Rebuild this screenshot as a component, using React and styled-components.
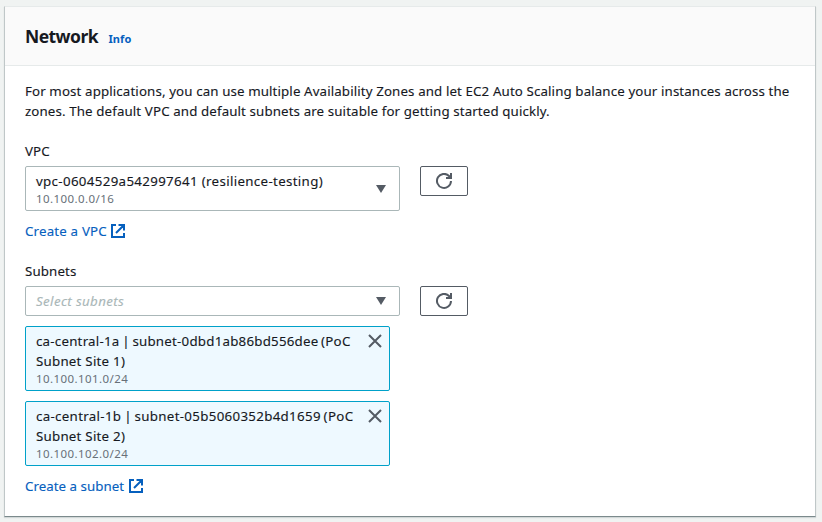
import React from "react";
import styled, { createGlobalStyle } from "styled-components";

const Global = createGlobalStyle`
  * { box-sizing: border-box; }
  body { margin: 0; background: #f0f3f2; font-family: "Noto Sans", "Open Sans", sans-serif; font-size: 13.3px; line-height: 20px; color: #16191f; -webkit-text-stroke: .12px currentColor; overflow: hidden; }
`;
const Page = styled.main`height: 522px; padding: 6px 6px 5px 4px;`;
const Panel = styled.section`height: 511px; background: #fff; border: 1px solid; border-color: #e6eaea #bfc7c8 #7b8a8c #bfc7c8; box-shadow: 0 1px 1px rgba(0,28,36,.12);`;
const Header = styled.header`height: 59px; background: #fafafa; border-bottom: 1px solid #e6eaea; padding: 0 20px; display: flex; align-items: baseline; gap: 10.5px;`;
const Title = styled.h2`margin: 17px 0 0; font-size: 17.5px; line-height: 24px; font-weight: 700; letter-spacing: -.56px; -webkit-text-stroke: 0;`;
const Info = styled.a`font-size: 11px; font-weight: 700; color: #0660be; letter-spacing: .1px; -webkit-text-stroke: 0;`;
const Content = styled.div`padding: 15px 20px;`;
const Description = styled.p`margin: 0 0 20px; letter-spacing: .12px; white-space: nowrap;`;
const Label = styled.div`margin-bottom: 5px; letter-spacing: .13px;`;
const Field = styled.div`margin-bottom: 20px;`;
const Row = styled.div`display: flex; align-items: flex-start; gap: 20px;`;
const Select = styled.div`width: 375px; height: ${p => p.$tall ? 45 : 30}px; border: 1px solid #aab7b8; border-radius: 2px; padding: 4px 12px 4px 10px; display: flex; align-items: center; justify-content: space-between;`;
const Value = styled.div`letter-spacing: ${p => p.$spacing}px; word-spacing: ${p => p.$word || 0}px; white-space: nowrap;`;
const Placeholder = styled.span`font-style: italic; color: #aab7b8; letter-spacing: .37px;`;
const Detail = styled.div`font-size: 11.5px; line-height: 15px; color: #687078; letter-spacing: .43px; -webkit-text-stroke: 0;`;
const Button = styled.button`width: 48px; height: 30px; padding: 0; background: #fff; border: 1px solid #545b64; border-radius: 2px; display: flex; align-items: center; justify-content: center;`;
const Link = styled.a`display: flex; align-items: center; gap: 3.5px; color: #0660be; margin-top: 10px; letter-spacing: ${p => p.$spacing}px;`;
const Token = styled.div`width: 365px; height: 65px; margin-top: 10px; border: 1px solid #00a1c9; background: #eef9ff; border-radius: 2px; padding: 4px 6px 0 10px; display: flex; justify-content: space-between;`;
const Icon = styled.svg`flex: none; display: block; fill: none; stroke: ${p => p.$color || "#545b64"}; stroke-width: 2;`;

const Caret = () => <Icon width="12" height="10" viewBox="0 0 12 10"><path d="M1 1h10L6 9z" fill="#545b64" stroke="none" /></Icon>;
const Refresh = () => <Icon width="16" height="16" viewBox="0 0 16 16"><path d="M15 8a7 7 0 1 1-2-5l2 2" /><path d="M10 5h5V0" /></Icon>;
const Close = () => <Icon width="16" height="20" viewBox="0 0 16 20"><path d="m2 4 12 12M14 4 2 16" /></Icon>;
const External = () => <Icon $color="#0660be" width="16" height="16" viewBox="0 0 16 16"><path d="M6 2H2v12h12v-4M8.5 2H14v5.5M14 2 6 10" /></Icon>;

const subnets = [
  { name: "ca-central-1a | subnet-0dbd1ab86bd556dee (PoC", site: "Subnet Site 1)", cidr: "10.100.101.0/24", spacing: 0.23 },
  { name: "ca-central-1b | subnet-05b5060352b4d1659 (PoC", site: "Subnet Site 2)", cidr: "10.100.102.0/24", spacing: 0.32 },
];

export default function App() {
  return <><Global /><Page><Panel>
    <Header><Title>Network</Title><Info>Info</Info></Header>
    <Content>
      <Description>For most applications, you can use multiple Availability Zones and let EC2 Auto Scaling balance your instances across the<br />zones. The default VPC and default subnets are suitable for getting started quickly.</Description>
      <Field><Label>VPC</Label>
        <Row><Select $tall><div><Value $spacing={0.34}>vpc-0604529a542997641 (resilience-testing)</Value><Detail>10.100.0.0/16</Detail></div><Caret /></Select><Button aria-label="Refresh VPCs"><Refresh /></Button></Row>
        <Link $spacing={0.18}>Create a VPC<External /></Link></Field>
      <Field><Label>Subnets</Label>
        <Row><Select><Placeholder>Select subnets</Placeholder><Caret /></Select><Button aria-label="Refresh subnets"><Refresh /></Button></Row>
        {subnets.map(({ name, site, cidr, spacing }) => <Token key={name}><div><Value $spacing={spacing} $word={-1}>{name}</Value><Value $spacing={0.24}>{site}</Value><Detail>{cidr}</Detail></div><Close /></Token>)}
        <Link $spacing={0.04}>Create a subnet<External /></Link></Field>
    </Content>
  </Panel></Page></>;
}
